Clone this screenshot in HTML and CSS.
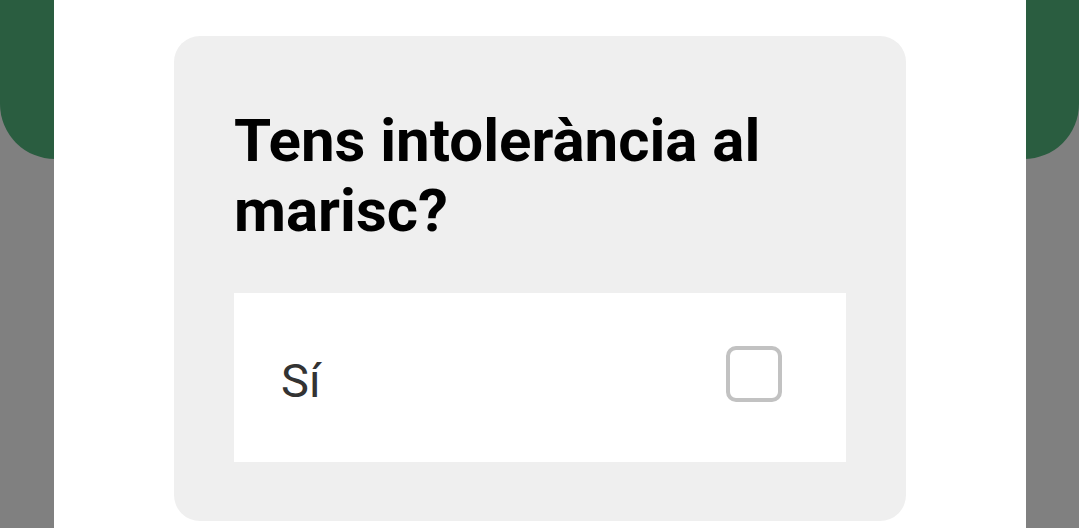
FILE: index.html
```html
<!DOCTYPE html>
<html lang="ca">
<head>
<meta charset="utf-8">
<link rel="stylesheet" href="styles.css">
</head>
<body>
<div class="screen">
  <div class="header"></div>
  <div class="sheet">
    <section class="card">
      <h1 class="title">Tens intolerància al marisc?</h1>
      <label class="option">
        <span class="option-label">Sí</span>
        <span class="checkbox"></span>
      </label>
    </section>
  </div>
</div>
</body>
</html>
```

FILE: styles.css
```css
html, body {
  margin: 0;
  padding: 0;
}
body {
  width: 1079px;
  height: 528px;
  overflow: hidden;
  background: #808080;
  font-family: Roboto, "Noto Sans", sans-serif;
}
.screen {
  display: grid;
  grid-template-columns: 1fr;
  grid-template-rows: 528px;
}
.header {
  grid-area: 1 / 1;
  height: 159px;
  background: #2a5d40;
  border-radius: 0 0 55px 55px;
}
.sheet {
  grid-area: 1 / 1;
  margin: 0 53px 0 54px;
  background: #ffffff;
  padding: 36px 0 0 120px;
}
.card {
  width: 732px;
  box-sizing: border-box;
  background: #efefef;
  border-radius: 26px;
  padding: 70px 60px 59px 60px;
}
.title {
  margin: 0;
  font-size: 60px;
  line-height: 70px;
  font-weight: 700;
  color: #000;
  letter-spacing: 0;
}
.option {
  margin-top: 47px;
  height: 169px;
  background: #fff;
  display: flex;
  align-items: center;
  justify-content: space-between;
  padding: 0 64px 0 47px;
}
.option-label {
  font-size: 47px;
  color: #333;
  padding-top: 6px;
}
.checkbox {
  width: 48px;
  height: 48px;
  border: 4px solid #c2c2c2;
  border-radius: 10px;
  margin-top: -8px;
}
```
